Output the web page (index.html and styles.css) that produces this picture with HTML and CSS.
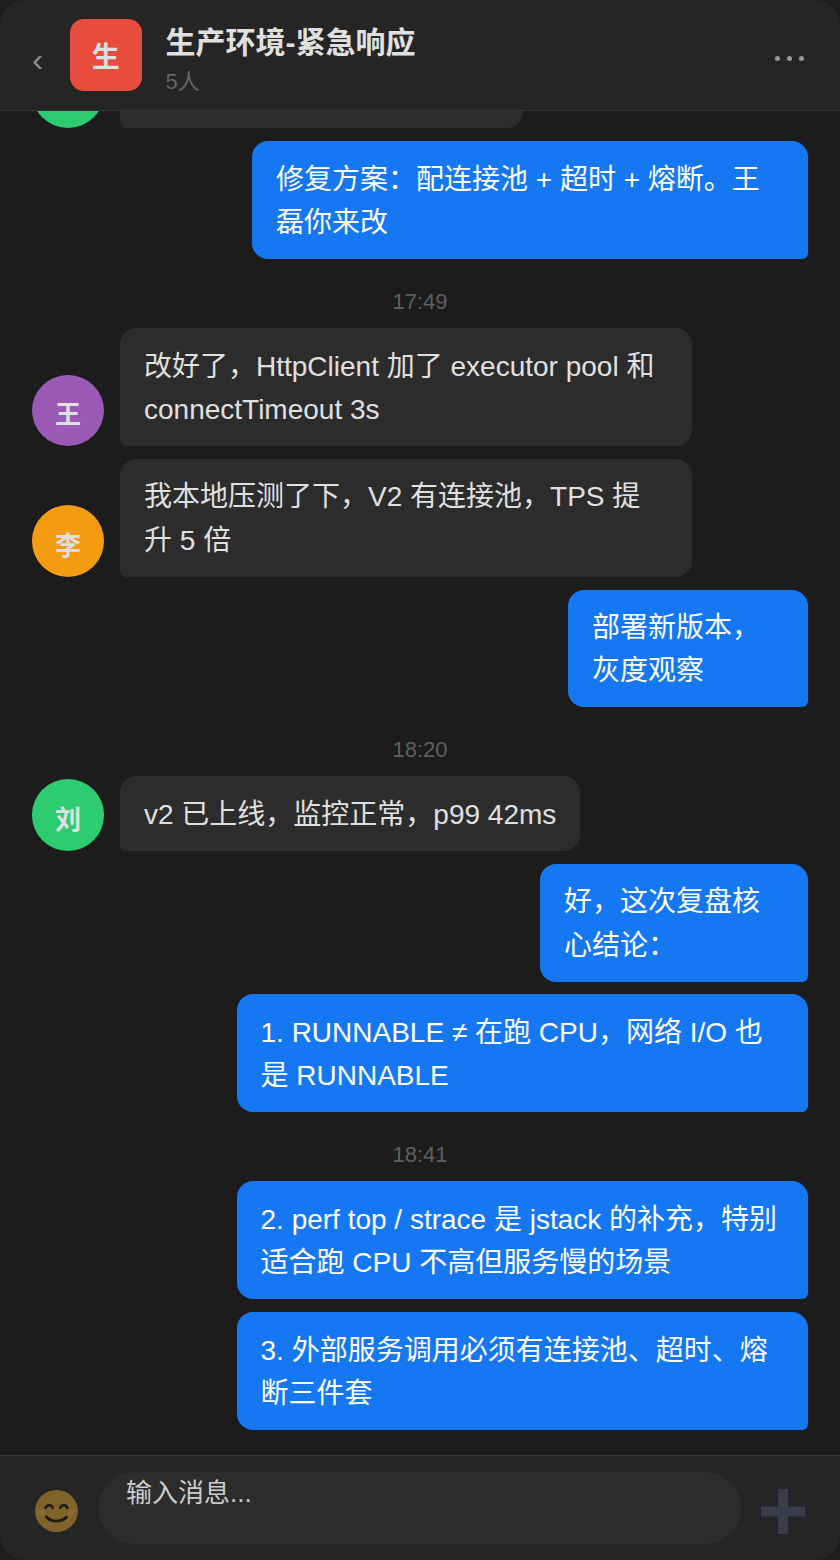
FILE: index.html
```html
<!DOCTYPE html>
<html>

<head>
    <title>生产环境-紧急响应</title>
    <meta charset="utf-8">
    <link rel="stylesheet" href="styles.css">
</head>

<body>
    <div class="chat">
        <div class="chat-header">
            <span class="back">‹</span>
            <div class="group-avatar">生</div>
            <div class="group-info">
                <div class="group-name">生产环境-紧急响应</div>
                <div class="group-count">5人</div>
            </div>
            <div class="more"><i></i><i></i><i></i></div>
        </div>

        <div class="messages">
            <div class="row">
                <div class="avatar green"></div>
                <div class="bubble w403">&nbsp;</div>
            </div>
            <div class="row self">
                <div class="bubble w556">修复方案：配连接池 + 超时 + 熔断。王磊你来改</div>
            </div>

            <div class="time">17:49</div>
            <div class="row">
                <div class="avatar purple">王</div>
                <div class="bubble w572">改好了，HttpClient 加了 executor pool 和 connectTimeout 3s</div>
            </div>
            <div class="row">
                <div class="avatar orange">李</div>
                <div class="bubble w572">我本地压测了下，V2 有连接池，TPS 提升 5 倍</div>
            </div>
            <div class="row self">
                <div class="bubble w240">部署新版本，灰度观察</div>
            </div>

            <div class="time">18:20</div>
            <div class="row">
                <div class="avatar green">刘</div>
                <div class="bubble">v2 已上线，监控正常，p99 42ms</div>
            </div>
            <div class="row self">
                <div class="bubble w268">好，这次复盘核心结论：</div>
            </div>
            <div class="row self">
                <div class="bubble w572">1. RUNNABLE ≠ 在跑 CPU，网络 I/O 也是 RUNNABLE</div>
            </div>

            <div class="time">18:41</div>
            <div class="row self">
                <div class="bubble w572">2. perf top / strace 是 jstack 的补充，特别适合跑 CPU 不高但服务慢的场景</div>
            </div>
            <div class="row self">
                <div class="bubble w572">3. 外部服务调用必须有连接池、超时、熔断三件套</div>
            </div>
        </div>

        <div class="input-bar">
            <svg class="icon icon-emoji" viewBox="0 0 43 42">
                <ellipse cx="21.500" cy="21" rx="21.500" ry="21" fill="#80632a"/>
                <circle cx="6.500" cy="23" r="3.500" fill="#876a34"/>
                <circle cx="36.500" cy="23" r="3.500" fill="#876a34"/>
                <path d="M10.500 18c1.300-3.600 6-3.600 7.300 0M25.200 18c1.300-3.600 6-3.600 7.300 0" fill="none" stroke="#1e1a0e" stroke-width="2.400" stroke-linecap="round"/>
                <path d="M11.500 27c5 5.500 15 5.500 20 0" fill="none" stroke="#1e1a0e" stroke-width="2.800" stroke-linecap="round"/>
            </svg>
            <textarea class="input" rows="1" placeholder="输入消息..."></textarea>
            <svg class="icon icon-plus" viewBox="0 0 44 45">
                <defs>
                    <pattern id="dots" width="3" height="3" patternUnits="userSpaceOnUse">
                        <rect width="3" height="3" fill="#363c4a"/>
                        <rect x="1" y="1" width="1" height="1" fill="#504640"/>
                    </pattern>
                </defs>
                <path d="M17 0h10v17.500h17v10h-17v17.500h-10v-17.500h-17v-10h17z" fill="url(#dots)"/>
            </svg>
        </div>
    </div>
</body>

</html>
```

FILE: styles.css
```css
* {
    box-sizing: border-box;
}

html,
body {
    margin: 0;
    padding: 0;
    height: 100%;
    background-color: #1e1e1e;
}

body {
    font-family: "Liberation Sans", "Noto Sans CJK SC", sans-serif;
}

.chat {
    display: flex;
    flex-direction: column;
    height: 100vh;
    overflow: hidden;
    border-radius: 24px;
    background-color: #1c1c1c;
}

/* header */
.chat-header {
    display: flex;
    align-items: center;
    flex-shrink: 0;
    height: 111px;
    padding: 0 36px 0 32px;
    background-color: #252525;
    border-bottom: 1px solid #31323a;
}

.back {
    width: 38px;
    margin-top: 7px;
    font-size: 34px;
    line-height: 1;
    color: #8c8c8c;
}

.group-avatar {
    display: flex;
    align-items: center;
    justify-content: center;
    width: 71.5px;
    height: 72px;
    border-radius: 14px;
    background-color: #e74c3c;
    color: #e0e0e0;
    font-size: 28px;
    font-weight: bold;
}

.group-info {
    flex: 1;
    margin-left: 24px;
    padding-top: 7px;
}

.group-name {
    font-size: 30px;
    line-height: 44px;
    font-weight: bold;
    color: #e0e0e0;
}

.group-count {
    margin-top: 2px;
    font-size: 22px;
    line-height: 30px;
    color: #666;
}

.more {
    display: flex;
    gap: 7px;
    margin-top: 7px;
}

.more i {
    width: 5px;
    height: 5px;
    border-radius: 50%;
    background-color: #999;
}

/* messages */
.messages {
    flex: 1;
    display: flex;
    flex-direction: column;
    justify-content: flex-end;
    gap: 12.8px;
    min-height: 0;
    overflow: hidden;
    padding: 0 32px 25px;
}

.row {
    display: flex;
    align-items: flex-end;
    flex-shrink: 0;
    gap: 16px;
}

.row.self {
    justify-content: flex-end;
}

.avatar {
    display: flex;
    align-items: center;
    justify-content: center;
    flex-shrink: 0;
    width: 72px;
    height: 71.5px;
    padding-top: 5px;
    border-radius: 50%;
    color: #e0e0e0;
    font-size: 26px;
    font-weight: bold;
}

.green {
    background-color: #2ecc71;
}

.purple {
    background-color: #9b59b6;
}

.orange {
    background-color: #f39c12;
}

.bubble {
    padding: 16.5px 24px 14.6px;
    border-radius: 16px 16px 16px 6px;
    background-color: #2c2c2c;
    color: #e0e0e0;
    font-size: 28px;
    line-height: 43.4px;
}

.self .bubble {
    border-radius: 16px 16px 6px 16px;
    background-color: #1677f2;
    color: #fff;
}

.w240 {
    width: 240px;
}

.w268 {
    width: 268px;
}

.w403 {
    width: 403px;
}

.w556 {
    width: 556px;
}

.w572 {
    width: 571.5px;
}

.time {
    flex-shrink: 0;
    margin-top: 16px;
    text-align: center;
    font-size: 22px;
    line-height: 27.4px;
    color: #5f5f5f;
}

/* input */
.input-bar {
    display: flex;
    align-items: center;
    flex-shrink: 0;
    height: 105px;
    padding: 0 35px;
    background-color: #252525;
    border-top: 1px solid #31323a;
}

.icon {
    flex-shrink: 0;
    margin-top: 6px;
}

.icon-emoji {
    width: 43px;
    height: 42px;
}

.icon-plus {
    width: 44px;
    height: 45px;
}

.input {
    flex: 1;
    height: 72px;
    margin: 0 20px;
    padding: 4px 28px;
    border: none;
    outline: none;
    resize: none;
    border-radius: 36px;
    background-color: #2c2c2c;
    color: #e0e0e0;
    font-family: inherit;
    font-size: 26px;
    line-height: 34px;
}

.input::placeholder {
    color: #ccc;
    opacity: 1;
}
```
